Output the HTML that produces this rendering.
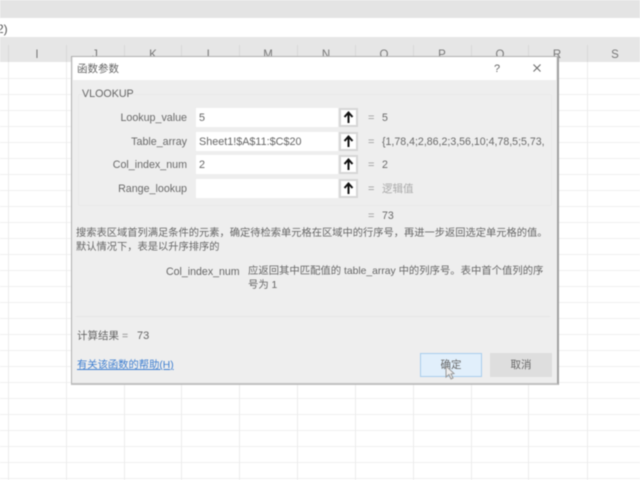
<!DOCTYPE html>
<html><head><meta charset="utf-8">
<style>
html,body{margin:0;padding:0;background:#fff}
#p{position:relative;width:640px;height:480px;overflow:hidden;background:#fff;font-family:"Liberation Sans","Noto Sans CJK SC",sans-serif;font-size:11px;color:#666;filter:blur(.5px)}
#p div{position:absolute;white-space:nowrap}
.v{top:37px;bottom:0;width:1px;background:linear-gradient(#e6e6e6 0,#e6e6e6 8px,#d8d8d8 8px,#d8d8d8 25px,#ececec 25px)}
.h{left:0;right:0;height:1px;background:#f0f0f0}
.c{top:48px;color:#777;font-size:11.5px;width:20px;text-align:center;line-height:14px}
.l{right:453px;text-align:right;line-height:14px;font-size:10.7px;color:#6a6a6a}
.f{left:196px;width:142px;height:19px;background:#fff;line-height:20px;text-indent:3px;font-size:10.8px;color:#666}
.b{left:339px;width:15px;height:15px;background:#fff;border:2px solid #d6d6d6}
.e{left:368px;line-height:14px;color:#999}
.r{left:382px;line-height:14px;color:#6a6a6a;font-size:10.6px}
.t{font-size:10.25px;line-height:14px;color:#666}
</style></head><body><div id="p">
<div style="left:0;top:0;width:640px;height:18px;background:#e4e4e4"></div>
<div style="left:0;top:37px;width:640px;height:25px;background:#e6e6e6"></div>
<div style="left:-3px;top:22px;font-size:12px;line-height:14px;color:#555">2)</div>

<div class="h" style="top:78px"></div><div class="h" style="top:94px"></div><div class="h" style="top:110px"></div><div class="h" style="top:126px"></div><div class="h" style="top:142px"></div><div class="h" style="top:158px"></div><div class="h" style="top:174px"></div><div class="h" style="top:190px"></div><div class="h" style="top:206px"></div><div class="h" style="top:222px"></div><div class="h" style="top:238px"></div><div class="h" style="top:254px"></div><div class="h" style="top:270px"></div><div class="h" style="top:286px"></div><div class="h" style="top:302px"></div><div class="h" style="top:318px"></div><div class="h" style="top:334px"></div><div class="h" style="top:350px"></div><div class="h" style="top:366px"></div><div class="h" style="top:382px"></div><div class="h" style="top:398px"></div><div class="h" style="top:414px"></div><div class="h" style="top:430px"></div><div class="h" style="top:446px"></div><div class="h" style="top:462px"></div><div class="h" style="top:478px"></div>

<div class="v" style="left:8px"></div><div class="v" style="left:66px"></div><div class="v" style="left:124px"></div><div class="v" style="left:181px"></div><div class="v" style="left:239px"></div><div class="v" style="left:297px"></div><div class="v" style="left:355px"></div><div class="v" style="left:413px"></div><div class="v" style="left:471px"></div><div class="v" style="left:528px"></div><div class="v" style="left:587px"></div>

<div class="c" style="left:27px">I</div><div class="c" style="left:85px">J</div><div class="c" style="left:143px">K</div><div class="c" style="left:200px">L</div><div class="c" style="left:258px">M</div><div class="c" style="left:316px">N</div><div class="c" style="left:374px">O</div><div class="c" style="left:432px">P</div><div class="c" style="left:490px">Q</div><div class="c" style="left:547px">R</div><div class="c" style="left:605px">S</div>

<div style="left:71px;top:56px;width:485px;height:326px;background:#eee;border:1px solid #b0b0b0;border-bottom:2px solid #c0c0c0;border-right:2px solid #a0a0a0"></div>
<div style="left:73px;top:57px;width:483px;height:23px;background:#fff"></div>
<div style="left:77px;top:62px;font-size:10.5px;line-height:14px;color:#666">函数参数</div>
<div style="left:494px;top:62px;font-size:11px;line-height:14px;color:#666">?</div>
<svg style="position:absolute;left:532px;top:63px" width="10" height="10"><path d="M1.5 1.5L8.5 8.5M8.5 1.5L1.5 8.5" stroke="#666" stroke-width="1" fill="none"/></svg>

<div style="left:78px;top:94px;width:472px;height:110px;border:1px solid #e9e9e9;border-radius:2px"></div>
<div style="left:82px;top:87px;font-size:10.7px;line-height:14px;color:#666">VLOOKUP</div>

<div class="l" style="top:111px">Lookup_value</div>
<div class="l" style="top:135px">Table_array</div>
<div class="l" style="top:158px">Col_index_num</div>
<div class="l" style="top:182px">Range_lookup</div>

<div class="f" style="top:108px">5</div>
<div class="f" style="top:132px">Sheet1!$A$11:$C$20</div>
<div class="f" style="top:155px">2</div>
<div class="f" style="top:179px"></div>

<div class="b" style="top:108px"><svg width="15" height="15" style="display:block"><path d="M7.5 13V3M3.5 7L7.5 2.5L11.5 7" stroke="#111" stroke-width="2" fill="none"/></svg></div>
<div class="b" style="top:132px"><svg width="15" height="15" style="display:block"><path d="M7.5 13V3M3.5 7L7.5 2.5L11.5 7" stroke="#111" stroke-width="2" fill="none"/></svg></div>
<div class="b" style="top:155px"><svg width="15" height="15" style="display:block"><path d="M7.5 13V3M3.5 7L7.5 2.5L11.5 7" stroke="#111" stroke-width="2" fill="none"/></svg></div>
<div class="b" style="top:179px"><svg width="15" height="15" style="display:block"><path d="M7.5 13V3M3.5 7L7.5 2.5L11.5 7" stroke="#111" stroke-width="2" fill="none"/></svg></div>

<div class="e" style="top:111px">=</div><div class="r" style="top:111px">5</div>
<div class="e" style="top:135px">=</div><div class="r" style="top:135px">{1,78,4;2,86,2;3,56,10;4,78,5;5,73,</div>
<div class="e" style="top:158px">=</div><div class="r" style="top:158px">2</div>
<div class="e" style="top:182px">=</div><div class="r" style="top:182px;color:#aaa;font-size:10.5px">逻辑值</div>
<div class="e" style="top:209px">=</div><div class="r" style="top:209px">73</div>

<div class="t" style="left:76px;top:227px">搜索表区域首列满足条件的元素，确定待检索单元格在区域中的行序号，再进一步返回选定单元格的值。</div>
<div class="t" style="left:76px;top:241px">默认情况下，表是以升序排序的</div>
<div style="left:166px;top:265px;font-size:10.6px;line-height:14px;color:#666">Col_index_num</div>
<div style="left:248px;top:265px;font-size:10.35px;line-height:14px;color:#666">应返回其中匹配值的 table_array 中的列序号。表中首个值列的序</div>
<div style="left:248px;top:279px;font-size:10.35px;line-height:14px;color:#666">号为 1</div>

<div style="left:76px;top:316px;width:474px;height:1px;background:#e6e6e6"></div>
<div style="left:77px;top:329px;font-size:10.5px;line-height:14px;color:#666">计算结果</div>
<div style="left:122px;top:329px;font-size:10.5px;line-height:14px;color:#888">=</div>
<div style="left:137px;top:329px;font-size:11px;line-height:14px;color:#666">73</div>
<div style="left:77px;top:359px;font-size:10.3px;line-height:14px;color:#3f7fd0;text-decoration:underline">有关该函数的帮助(H)</div>

<div style="left:420px;top:353px;width:60px;height:22px;background:#e1effb;border:1px solid #a9cdec;text-align:center;line-height:22px;font-size:10.5px;color:#666">确定</div>
<div style="left:490px;top:353px;width:62px;height:24px;background:#dedede;text-align:center;line-height:24px;font-size:10.5px;color:#666">取消</div>
<svg style="position:absolute;left:444px;top:365px" width="12" height="16"><path d="M2 1L2 12L5 9.5L7 14L9 13L7 9L10 8.5Z" fill="#eee" stroke="#999" stroke-width="1"/></svg>
</div></body></html>
